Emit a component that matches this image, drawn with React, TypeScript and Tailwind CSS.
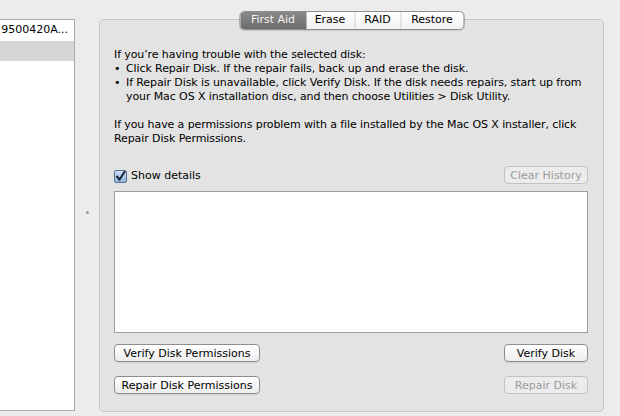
import React from 'react';

const font = { fontFamily: '"DejaVu Sans", "Liberation Sans", sans-serif' };

function MacButton({ label, disabled, width }: { label: string; disabled?: boolean; width: string }) {
  return (
    <button
      className={`${width} h-[18px] rounded-[4px] border text-[11px] leading-none flex items-center justify-center ${
        disabled
          ? 'border-[#c2c2c2] bg-[#ececec] text-[#9b9b9b]'
          : 'border-[#8e8e8e] bg-gradient-to-b from-white to-[#ededed] text-black shadow-[0_1px_0_rgba(0,0,0,0.08)]'
      }`}
    >
      {label}
    </button>
  );
}

function Tabs() {
  const tabs = ['First Aid', 'Erase', 'RAID', 'Restore'];
  const widths = ['w-[66px]', 'w-[48px]', 'w-[46px]', 'w-[63px]'];
  return (
    <div className="absolute left-1/2 -translate-x-1/2 top-[-9px] flex h-[19px] rounded-[5px] border border-[#8c8c8c] overflow-hidden bg-gradient-to-b from-white to-[#f1f1f1] shadow-[0_1px_1px_rgba(0,0,0,0.12)]">
      {tabs.map((t, i) => (
        <div
          key={t}
          className={`${widths[i]} flex items-center justify-center text-[11px] ${
            i === 0
              ? 'bg-gradient-to-b from-[#8a8a8a] to-[#6c6c6c] text-[#f2f2f2]'
              : 'text-black'
          } ${i > 1 ? 'border-l border-[#d0d0d0]' : ''}`}
        >
          {t}
        </div>
      ))}
    </div>
  );
}

export default function App() {
  return (
    <div className="w-[620px] h-[416px] bg-[#ececec] flex overflow-hidden text-black" style={font}>
      {/* disk list */}
      <div className="w-[75px] mt-[19px] h-[392px] bg-white border-y border-r border-[#a9a9a9] shrink-0">
        <div className="h-[21px] flex items-center text-[11px] whitespace-nowrap overflow-hidden justify-end pr-[6px]">
          9500420A...
        </div>
        <div className="h-[20px] bg-[#d6d6d6]" />
      </div>

      {/* splitter */}
      <div className="w-[24px] shrink-0 flex items-center justify-center">
        <div className="w-[3px] h-[3px] rounded-full bg-[#9a9a9a] mt-[8px]" />
      </div>

      {/* group box */}
      <div className="relative w-[505px] mt-[19px] h-[393px] rounded-[5px] border border-[#c6c6c6] bg-[#e3e3e3] shrink-0 pl-[14px] pr-[15px] pt-[28px]">
        <Tabs />
        <div className="text-[11px] leading-[14px] tracking-[-0.1px]">
          <p>If you’re having trouble with the selected disk:</p>
          <div className="flex">
            <span className="w-[12px] shrink-0">•</span>
            <span>Click Repair Disk. If the repair fails, back up and erase the disk.</span>
          </div>
          <div className="flex">
            <span className="w-[12px] shrink-0">•</span>
            <span>
              If Repair Disk is unavailable, click Verify Disk. If the disk needs repairs, start up from your Mac OS X
              installation disc, and then choose Utilities &gt; Disk Utility.
            </span>
          </div>
          <p className="mt-[14px]">
            If you have a permissions problem with a file installed by the Mac OS X installer, click Repair Disk
            Permissions.
          </p>
        </div>

        <div className="mt-[20px] flex items-center justify-between h-[18px]">
          <label className="flex items-center gap-[4px] text-[11px] mt-[2px]">
            <span className="w-[13px] h-[13px] rounded-[2px] border border-[#5a6f8e] bg-gradient-to-b from-[#cfe0f5] to-[#8fb4e3] flex items-center justify-center">
              <svg width="11" height="11" viewBox="0 0 11 11">
                <path d="M2 5.5 L4.5 8.5 L9.5 1" fill="none" stroke="#1a2230" strokeWidth="2" strokeLinecap="round" />
              </svg>
            </span>
            Show details
          </label>
          <MacButton label="Clear History" disabled width="w-[84px]" />
        </div>

        <div className="mt-[7px] h-[142px] bg-white border border-[#9d9d9d]" />

        <div className="mt-[11px] flex justify-between">
          <MacButton label="Verify Disk Permissions" width="w-[146px]" />
          <MacButton label="Verify Disk" width="w-[84px]" />
        </div>
        <div className="mt-[14px] flex justify-between">
          <MacButton label="Repair Disk Permissions" width="w-[146px]" />
          <MacButton label="Repair Disk" disabled width="w-[84px]" />
        </div>
      </div>
    </div>
  );
}
